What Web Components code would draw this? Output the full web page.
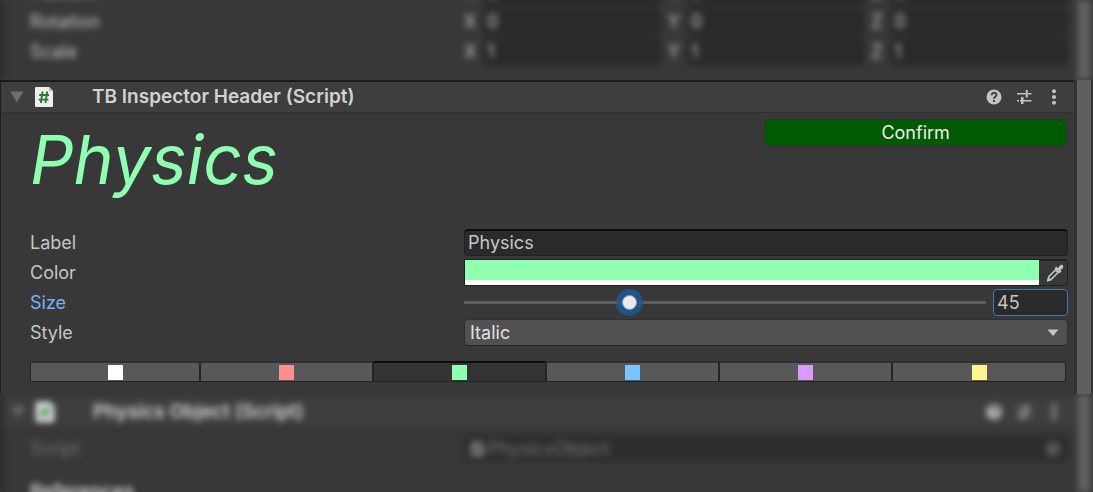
<!DOCTYPE html>
<html lang="en">
<head>
<meta charset="utf-8">
<title>Inspector</title>
<style>
  html, body { height: 100%; }
  body { margin: 0; background: #383838; color: #c6c6c6; font: 18px/25px Inter, sans-serif; overflow: hidden; }
</style>
</head>
<body>
<inspector-window></inspector-window>

<script>
const base = `
  *, *::before, *::after { box-sizing: border-box; }
  input, select, button { font: inherit; color: inherit; margin: 0; outline: none; }
`;
const rowCss = base + `
  :host { box-sizing: border-box; display: grid; grid-template-columns: 434fr 604fr; align-items: center; height: 30px; padding: 0 6px 1px 0; }
  .box { height: 27px; border: 1px solid #212121; border-radius: 4px; background: #2a2a2a; }
`;

function define(name, render, after) {
  customElements.define(name, class extends HTMLElement {
    connectedCallback() {
      if (this.shadowRoot) return;
      const root = this.attachShadow({ mode: 'open' });
      root.innerHTML = render(this);
      if (after) after(root, this);
    }
  });
}

define('script-icon', () => `
  <style>:host { display: block; width: 18px; height: 20px; } svg { display: block; width: 100%; height: 100%; }</style>
  <svg viewBox="0 0 18 20" aria-hidden="true">
    <path d="M1 0H14L18 4V19Q18 20 17 20H1Q0 20 0 19V1Q0 0 1 0Z" fill="#eee"/>
    <path d="M14 0L18 4H14Z" fill="#bbb"/>
    <path d="M7.600 4.500L5.800 16M12.200 4.500L10.400 16M4.200 8H14M3.600 12.600H13.400" stroke="#2c7a34" stroke-width="1.900" fill="none"/>
  </svg>`);

define('component-header', el => `
  <style>${base}
    :host { display: block; }
    header { display: flex; align-items: center; height: 31px; padding: 0 12px 0 9px; background: #3e3e3e; border-bottom: 1px solid #303030; }
    button { display: grid; place-items: center; width: 30px; height: 30px; padding: 0; border: 0; background: none; color: #c4c4c4; }
    .fold { width: 14px; color: #6e6e6e; margin-right: 11px; }
    h2 { flex: 1; margin: 0 0 0 39px; font: 600 19px/26px Inter, sans-serif; color: #d2d2d2; }
    .tools { display: flex; margin-right: -7px; }
    svg { display: block; }
  </style>
  <header>
    <button class="fold" aria-label="Collapse"><svg width="14" height="12"><path d="M0.500 0.500H13.500L7 11.500Z" fill="currentColor"/></svg></button>
    <script-icon></script-icon>
    <h2>${el.getAttribute('heading')}</h2>
    <div class="tools">
      <button aria-label="Help"><svg width="16" height="16"><circle cx="8" cy="8" r="7.500" fill="currentColor"/><path d="M5.600 6.300C5.700 3 10.500 3.100 10.500 6C10.500 7.800 8 7.700 8 9.800" fill="none" stroke="#3e3e3e" stroke-width="1.900"/><rect x="7" y="11" width="2" height="2" fill="#3e3e3e"/></svg></button>
      <button aria-label="Presets"><svg width="16" height="16" fill="currentColor"><path d="M1 4H9.500V5.500H1ZM12 4H15.500V5.500H12ZM9.700 1H11.800V8.500H9.700ZM1 11H3V12.500H1ZM8 11H15.500V12.500H8ZM5 8H7.500V15H5ZM4 11H8V12.500H4Z"/></svg></button>
      <button aria-label="More"><svg width="16" height="16" fill="currentColor"><circle cx="8" cy="2.200" r="2"/><circle cx="8" cy="8" r="2"/><circle cx="8" cy="13.800" r="2"/></svg></button>
    </div>
  </header>`);

define('inspector-pane', () => `
  <style>${base}
    :host { display: block; overflow: hidden; }
    .frame { display: grid; grid-template: minmax(0, 1fr) / minmax(0, 1fr) 19px; height: 100%; }
    .content { border-left: 1px solid #1e1e1e; }
    .rail { background: #323232; padding: 0 2px 0 3px; display: grid; }
    .thumb { background: #5f5f5f; }
    :host([blurred]) .frame { filter: blur(3px); }
    :host([blurred]) .content { border-left: 2px solid #141414; }
    :host([anchor=end]) .content { display: flex; flex-direction: column; justify-content: flex-end; min-height: 0; }
  </style>
  <div class="frame"><div class="content"><slot></slot></div><div class="rail"><div class="thumb"></div></div></div>`);

define('vector-property', el => `
  <style>${rowCss}
    .axes { display: grid; grid-template-columns: repeat(3, 1fr); gap: 7px; }
    .axes label { display: grid; grid-template-columns: 19px minmax(0, 1fr); align-items: center; }
    input { width: 100%; padding: 0 3px; }
  </style>
  <span>${el.getAttribute('label')}</span>
  <div class="axes">${['X', 'Y', 'Z'].map(a => `<label>${a}<input class="box" value="${el.getAttribute('value')}"></label>`).join('')}</div>`);

define('text-property', el => `
  <style>${rowCss}
    input.box { width: 100%; padding: 0 3px; border-top: 2px solid #0d0d0d; padding-bottom: 1px; }
  </style>
  <label for="field">${el.getAttribute('label')}</label>
  <input id="field" class="box" value="${el.getAttribute('value')}">`);

define('color-property', el => `
  <style>${rowCss}
    .color { display: grid; grid-template-columns: minmax(0, 1fr) 29px; height: 27px; }
    .well { display: grid; grid-template-rows: 1fr 5px; border: 1px solid #202020; border-right: 0; }
    input { appearance: none; width: 100%; height: 100%; padding: 0; border: 0; background: none; }
    input::-webkit-color-swatch-wrapper { padding: 0; }
    input::-webkit-color-swatch { border: 0; border-radius: 0; }
    .alpha { background: #fff; }
    button { display: grid; place-items: center; padding: 0 0 0 3px; background: #383838; border: 1px solid #202020; border-top-width: 2px; border-left: 0; border-radius: 0 4px 4px 0; }
  </style>
  <label for="field">${el.getAttribute('label')}</label>
  <div class="color">
    <div class="well"><input id="field" type="color" value="${el.getAttribute('value')}"><div class="alpha"></div></div>
    <button aria-label="Pick color"><svg width="18" height="18" viewBox="0 0 18 18">
      <path d="M10.200 2.600L12 4.200L14 1.500Q16 0 17 1.500Q18 3 16.500 4.400L14.500 6L15.500 7.500L13.800 9.200L8.600 4.200Z" fill="#c4c4c4"/>
      <path d="M9.500 6L12 8.500L5.500 15L2 16.500L3 12.500Z" fill="none" stroke="#c4c4c4" stroke-width="1.600"/>
      <path d="M1 17.500L2 13L5.500 16.500Z" fill="#c4c4c4"/>
    </svg></button>
  </div>`);

define('slider-property', el => `
  <style>${rowCss}
    label { color: #7baefa; }
    .slider { display: grid; grid-template-columns: minmax(0, 1fr) 75px; gap: 7px; align-items: center; }
    input[type=range] { appearance: none; width: 100%; height: 27px; background: none; }
    input::-webkit-slider-runnable-track { height: 3px; background: #5e5e5e; }
    input::-webkit-slider-thumb { appearance: none; width: 15px; height: 15px; margin-top: -6px; border: 1px solid #999; border-radius: 50%; background: #ebebeb; box-shadow: 0 0 0 6px rgba(30, 88, 148, .85); }
    input.box { width: 100%; padding: 0 3px; border-color: #3a79bb; }
  </style>
  <label for="range">${el.getAttribute('label')}</label>
  <div class="slider">
    <input id="range" type="range" min="10" max="122" value="${el.getAttribute('value')}">
    <input id="number" class="box" aria-label="${el.getAttribute('label')} value" value="${el.getAttribute('value')}">
  </div>`,
  root => {
    const range = root.getElementById('range'), number = root.getElementById('number');
    range.oninput = () => { number.value = range.value; };
    number.onchange = () => { range.value = number.value; };
  });

define('select-property', el => `
  <style>${rowCss}
    .drop { display: grid; align-items: center; }
    select.box { grid-area: 1 / 1; appearance: none; width: 100%; padding: 0 5px; border-color: #303030; border-bottom-color: #242424; background: #515151; color: #e0e0e0; }
    svg { grid-area: 1 / 1; justify-self: end; margin-right: 9px; pointer-events: none; }
  </style>
  <label for="field">${el.getAttribute('label')}</label>
  <div class="drop">
    <select id="field" class="box"><option>Normal</option><option>Bold</option><option selected>Italic</option></select>
    <svg width="12" height="8"><path d="M0.500 0.500H11.500L6 7Z" fill="#c4c4c4"/></svg>
  </div>`);

define('object-property', el => `
  <style>${rowCss}
    :host { opacity: .4; }
    .box { display: flex; align-items: center; gap: 4px; padding: 0 6px; background: #202020; }
    script-icon { width: 13px; height: 16px; }
    output { flex: 1; }
  </style>
  <label for="field">${el.getAttribute('label')}</label>
  <div class="box"><script-icon></script-icon><output id="field">${el.getAttribute('value')}</output>
    <svg width="16" height="16"><circle cx="8" cy="8" r="6" fill="none" stroke="#c4c4c4" stroke-width="2"/><circle cx="8" cy="8" r="3" fill="#c4c4c4"/></svg></div>`);

define('color-palette', el => `
  <style>${base}
    :host { display: grid; grid-template-columns: 170fr repeat(4, 173fr) 174fr; margin: 13px 8px 12px 0; }
    button { display: grid; place-items: center; height: 21px; padding: 0; background: #585858; border: 0 solid #242424; border-top: 2px solid #303030; border-width: 2px 1px 1px; }
    button:first-child { border-radius: 4px 0 0 4px; }
    button:last-child { border-radius: 0 4px 4px 0; }
    button[aria-pressed=true] { background: #333; border-top-color: #0d0d0d; }
    i { width: 15px; height: 15px; background: var(--swatch); }
  </style>
  ${el.getAttribute('colors').split(' ').map(c => `<button aria-label="${c}" aria-pressed="${c === el.getAttribute('value')}"><i style="--swatch:${c}"></i></button>`).join('')}`,
  root => {
    const all = [...root.querySelectorAll('button')];
    all.forEach(b => b.onclick = () => all.forEach(o => o.setAttribute('aria-pressed', o === b)));
  });

define('header-preview', () => `
  <style>${base}
    :host { box-sizing: border-box; display: grid; grid-template-columns: 735fr 303fr; align-items: start; height: 115px; padding: 6px 7px 0 0; }
    h1 { margin: 0; font: italic 400 68px/80px Inter, sans-serif; color: #8fffb1; }
    button { height: 27px; padding: 0; border: 1px solid #2b3a2b; border-radius: 4px; background: #005a00; color: #eee; }
  </style>
  <h1><slot></slot></h1>
  <button>Confirm</button>`);

define('inspector-window', () => `
  <style>${base}
    :host { display: grid; grid-template-rows: 80px auto minmax(0, 1fr); height: 100vh; }
    .fields { padding-left: 29px; }
    .transform { padding-bottom: 13px; }
    .main component-header { border-top: 2px solid #1a1a1a; }
    .next { padding-top: 3px; }
    .script { padding-top: 6px; }
    h3 { margin: 12px 0 0; font: 600 19px/32px Inter, sans-serif; color: #d2d2d2; }
    .blur-fields { padding-left: 28px; }
  </style>
  <inspector-pane blurred anchor="end">
    <div class="blur-fields transform">
      <vector-property label="Position" value="0"></vector-property>
      <vector-property label="Rotation" value="0"></vector-property>
      <vector-property label="Scale" value="1"></vector-property>
    </div>
  </inspector-pane>
  <inspector-pane class="main">
    <component-header heading="TB Inspector Header (Script)"></component-header>
    <div class="fields">
      <header-preview>Physics</header-preview>
      <text-property label="Label" value="Physics"></text-property>
      <color-property label="Color" value="#8fffb1"></color-property>
      <slider-property label="Size" value="45"></slider-property>
      <select-property label="Style"></select-property>
      <color-palette value="#8fffb1" colors="#ffffff #ff8f8f #8fffb1 #78c5ff #db9aff #fff48f"></color-palette>
    </div>
  </inspector-pane>
  <inspector-pane blurred>
    <div class="next"><component-header heading="Physics Object (Script)"></component-header></div>
    <div class="blur-fields script">
      <object-property label="Script" value="PhysicsObject"></object-property>
      <h3>References</h3>
    </div>
  </inspector-pane>`);
</script>
</body>
</html>
